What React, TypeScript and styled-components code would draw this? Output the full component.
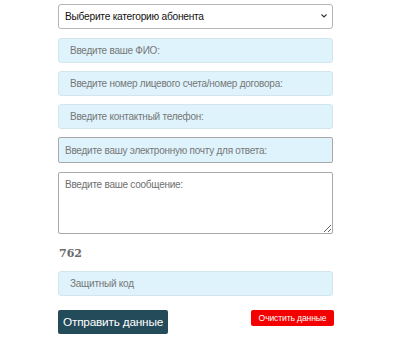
import styled, { createGlobalStyle } from "styled-components";

const GlobalStyle = createGlobalStyle`
  html, body {
    margin: 0;
    padding: 0;
    background: #ffffff;
    font-family: "Liberation Sans", Arial, sans-serif;
  }
`;

const Form = styled.form`
  width: 275px;
  margin: 4px 0 0 58px;
  display: flex;
  flex-direction: column;
`;

const SelectWrap = styled.div`
  position: relative;
  margin-bottom: 9px;
`;

const Select = styled.select`
  box-sizing: border-box;
  width: 100%;
  height: 25px;
  padding: 0 6px;
  appearance: none;
  background: #ffffff;
  border: 1px solid #b5b5b5;
  border-radius: 3px;
  font-family: "Liberation Sans", Arial, sans-serif;
  font-size: 10.2px;
  letter-spacing: -0.25px;
  color: #111111;
  outline: none;
`;

const Chevron = styled.svg`
  position: absolute;
  right: 6px;
  top: 10px;
  width: 6px;
  height: 4px;
  pointer-events: none;
`;

const Field = styled.input<{ $plain?: boolean }>`
  box-sizing: border-box;
  height: ${(p) => (p.$plain ? "26px" : "25px")};
  margin-bottom: ${(p) => (p.$plain ? "9px" : "8px")};
  padding: 0 ${(p) => (p.$plain ? "6px" : "11px")};
  background: #def3fc;
  border: 1px solid ${(p) => (p.$plain ? "#a9a9a9" : "#d3e6ee")};
  border-radius: ${(p) => (p.$plain ? "2px" : "3px")};
  font-family: "Liberation Sans", Arial, sans-serif;
  font-size: 10px;
  letter-spacing: -0.25px;
  color: #333333;
  outline: none;
  &::placeholder {
    color: #777777;
  }
`;

const Message = styled.textarea`
  box-sizing: border-box;
  height: 62px;
  padding: 6px 6px;
  background: #ffffff;
  border: 1px solid #a9a9a9;
  border-radius: 2px;
  font-family: "Liberation Sans", Arial, sans-serif;
  font-size: 10px;
  letter-spacing: -0.25px;
  outline: none;
  resize: vertical;
  &::placeholder {
    color: #6f6f6f;
  }
`;

const Code = styled.div`
  margin: 13px 0 10px 1px;
  font-family: "DejaVu Serif", Georgia, serif;
  font-weight: bold;
  font-size: 11px;
  line-height: 14px;
  color: #6a6a6a;
`;

const Buttons = styled.div`
  display: flex;
  justify-content: space-between;
  align-items: flex-start;
  margin-top: 6px;
`;

const Submit = styled.button`
  width: 110px;
  height: 24px;
  padding: 0;
  background: #244b5a;
  border: none;
  border-radius: 2px;
  color: #ffffff;
  font-family: "Liberation Sans", Arial, sans-serif;
  font-size: 11.8px;
  letter-spacing: -0.2px;
  cursor: pointer;
`;

const Clear = styled.button`
  height: 16px;
  width: 83px;
  padding: 0;
  margin-right: -1px;
  background: #f50000;
  border: none;
  border-radius: 2px;
  color: #ffffff;
  font-family: "Liberation Sans", Arial, sans-serif;
  font-size: 8.6px;
  letter-spacing: -0.15px;
  cursor: pointer;
`;

export default function App() {
  return (
    <>
      <GlobalStyle />
      <Form onSubmit={(e) => e.preventDefault()}>
        <SelectWrap>
          <Select defaultValue="">
            <option value="">Выберите категорию абонента</option>
            <option value="fl">Физическое лицо</option>
            <option value="ul">Юридическое лицо</option>
          </Select>
          <Chevron viewBox="0 0 6 4">
            <path d="M0.5 0.5 L3 3 L5.5 0.5" fill="none" stroke="#333" strokeWidth="1.1" />
          </Chevron>
        </SelectWrap>
        <Field placeholder="Введите ваше ФИО:" />
        <Field placeholder="Введите номер лицевого счета/номер договора:" />
        <Field placeholder="Введите контактный телефон:" />
        <Field $plain placeholder="Введите вашу электронную почту для ответа:" />
        <Message placeholder="Введите ваше сообщение:" />
        <Code>762</Code>
        <Field placeholder="Защитный код" />
        <Buttons>
          <Submit type="submit">Отправить данные</Submit>
          <Clear type="reset">Очистить данные</Clear>
        </Buttons>
      </Form>
    </>
  );
}
